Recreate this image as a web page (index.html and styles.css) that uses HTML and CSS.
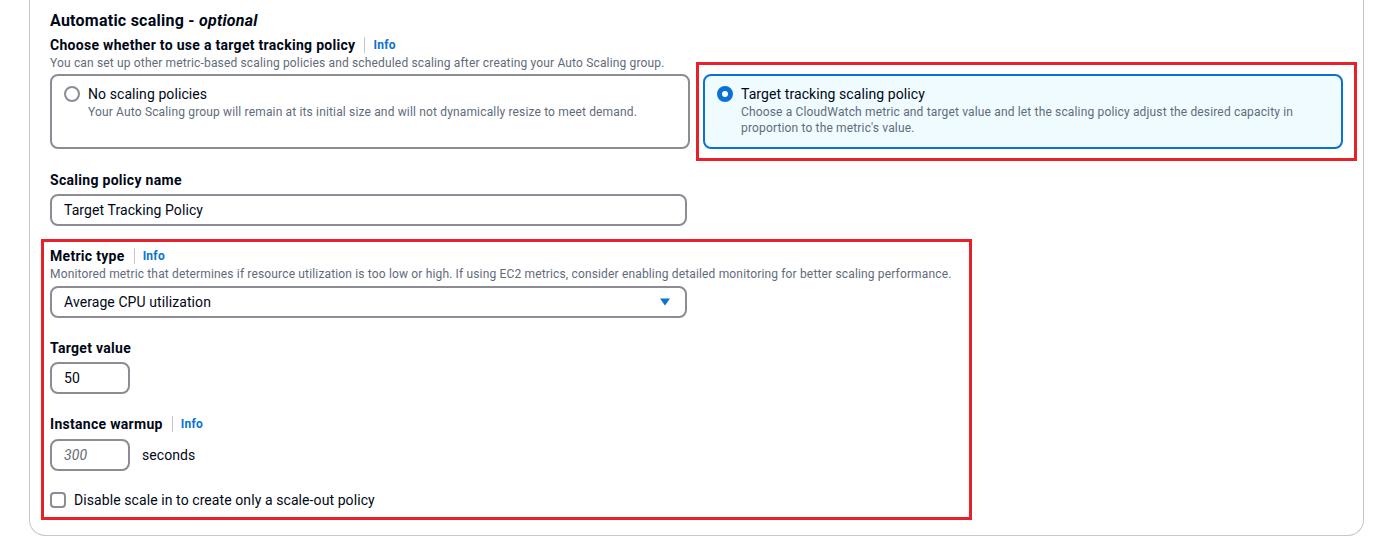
FILE: index.html
```html
<!DOCTYPE html>
<html lang="en">
<head>
<meta charset="utf-8">
<title>Automatic scaling</title>
<link rel="stylesheet" href="styles.css">
</head>
<body>
<div class="page">
  <section class="card">
    <h2 class="title">Automatic scaling - <i>optional</i></h2>

    <div class="label-row"><span class="label">Choose whether to use a target tracking policy</span><span class="sep"></span><a class="info">Info</a></div>
    <div class="desc">You can set up other metric-based scaling policies and scheduled scaling after creating your Auto Scaling group.</div>

    <div class="tiles">
      <div class="tile">
        <span class="radio"></span>
        <div class="tile-text">
          <div class="tile-label">No scaling policies</div>
          <div class="tile-desc">Your Auto Scaling group will remain at its initial size and will not dynamically resize to meet demand.</div>
        </div>
      </div>
      <div class="tile selected">
        <span class="radio checked"></span>
        <div class="tile-text">
          <div class="tile-label">Target tracking scaling policy</div>
          <div class="tile-desc">Choose a CloudWatch metric and target value and let the scaling policy adjust the desired capacity in<br>proportion to the metric's value.</div>
        </div>
      </div>
    </div>

    <div class="field first">
      <div class="label-row"><span class="label">Scaling policy name</span></div>
      <div class="input wide">Target Tracking Policy</div>
    </div>

    <div class="field">
      <div class="label-row"><span class="label">Metric type</span><span class="sep"></span><a class="info">Info</a></div>
      <div class="desc">Monitored metric that determines if resource utilization is too low or high. If using EC2 metrics, consider enabling detailed monitoring for better scaling performance.</div>
      <div class="input wide select">
        <span>Average CPU utilization</span>
        <svg class="caret" width="12" height="10" viewBox="0 0 12 10"><path d="M1 1.5h10L6 8.5z" fill="#0972d3"/></svg>
      </div>
    </div>

    <div class="field">
      <div class="label-row"><span class="label">Target value</span></div>
      <div class="input small">50</div>
    </div>

    <div class="field">
      <div class="label-row"><span class="label">Instance warmup</span><span class="sep"></span><a class="info">Info</a></div>
      <div class="inline">
        <div class="input small placeholder">300</div>
        <span class="unit">seconds</span>
      </div>
    </div>

    <label class="check-row">
      <span class="checkbox"></span>
      <span>Disable scale in to create only a scale-out policy</span>
    </label>
  </section>

  <div class="annot annot-tile"></div>
  <div class="annot annot-metric"></div>
</div>
</body>
</html>
```

FILE: styles.css
```css
* { box-sizing: border-box; }

html, body {
  margin: 0;
  padding: 0;
  background: #ffffff;
}

body {
  font-family: Roboto, "Liberation Sans", Arial, sans-serif;
  color: #000716;
  font-size: 14px;
  line-height: 20px;
  letter-spacing: 0.006em;
}

.page {
  position: relative;
  padding: 0 21px 0 29px;
  height: 544px;
}

.card {
  border: 1px solid #c6c6cd;
  border-top: none;
  border-radius: 0 0 16px 16px;
  padding: 11px 20px 25px 20px;
}

.title {
  margin: 0;
  font-size: 16px;
  line-height: 20px;
  font-weight: 700;
  letter-spacing: 0.015em;
}

.title i { font-weight: 700; }

.label-row {
  display: flex;
  align-items: center;
  height: 20px;
  margin-top: 4px;
}

.label {
  font-weight: 700;
  font-size: 14px;
  letter-spacing: 0.021em;
}

.sep {
  width: 1px;
  height: 16px;
  background: #c6c6cd;
  margin: 0 8px 0 9px;
}

.info {
  color: #0972d3;
  font-weight: 700;
  font-size: 12px;
  letter-spacing: 0.02em;
}

.desc {
  font-size: 12px;
  line-height: 16px;
  color: #5f6b7a;
  letter-spacing: 0.013em;
}

.tiles {
  display: grid;
  grid-template-columns: 1fr 1fr;
  gap: 13px;
  margin-top: 3px;
}

.tile {
  display: flex;
  align-items: flex-start;
  gap: 8px;
  height: 75px;
  border: 2px solid #8c8c94;
  border-radius: 8px;
  padding: 8px 12px 11px 12px;
  background: #ffffff;
}

.tile.selected {
  border-color: #0972d3;
  background: #f0fbff;
}

.radio {
  flex: none;
  width: 16px;
  height: 16px;
  margin-top: 2px;
  border-radius: 50%;
  border: 2px solid #8c8c94;
  background: #ffffff;
}

.radio.checked {
  border: 5px solid #0972d3;
}

.tile-label {
  font-size: 14px;
  line-height: 20px;
}

.tile-desc {
  font-size: 12px;
  line-height: 16px;
  color: #5f6b7a;
  letter-spacing: 0.013em;
}

.field {
  margin-top: 20px;
}

.field.first {
  margin-top: 21px;
}

.field .label-row { margin-top: 0; }

.input {
  margin-top: 4px;
  height: 32px;
  border: 2px solid #8c8c94;
  border-radius: 8px;
  padding: 0 12px;
  display: flex;
  align-items: center;
  font-size: 14px;
  background: #ffffff;
}

.wide { width: 637px; }

.small { width: 80px; }

.select {
  justify-content: space-between;
  padding-right: 14px;
}

.placeholder {
  color: #656871;
  font-style: italic;
}

.inline {
  display: flex;
  align-items: center;
  gap: 12px;
  margin-top: 5px;
}

.inline .input { margin-top: 0; }

.check-row {
  display: flex;
  align-items: center;
  gap: 8px;
  margin-top: 19px;
}

.checkbox {
  width: 16px;
  height: 16px;
  border: 2px solid #8c8c94;
  border-radius: 4px;
  background: #ffffff;
}

.annot {
  position: absolute;
  border: 3px solid #e8202a;
  pointer-events: none;
}

.annot-tile {
  left: 696px;
  top: 62px;
  width: 661px;
  height: 99px;
}

.annot-metric {
  left: 41px;
  top: 239px;
  width: 931px;
  height: 281px;
}
```
